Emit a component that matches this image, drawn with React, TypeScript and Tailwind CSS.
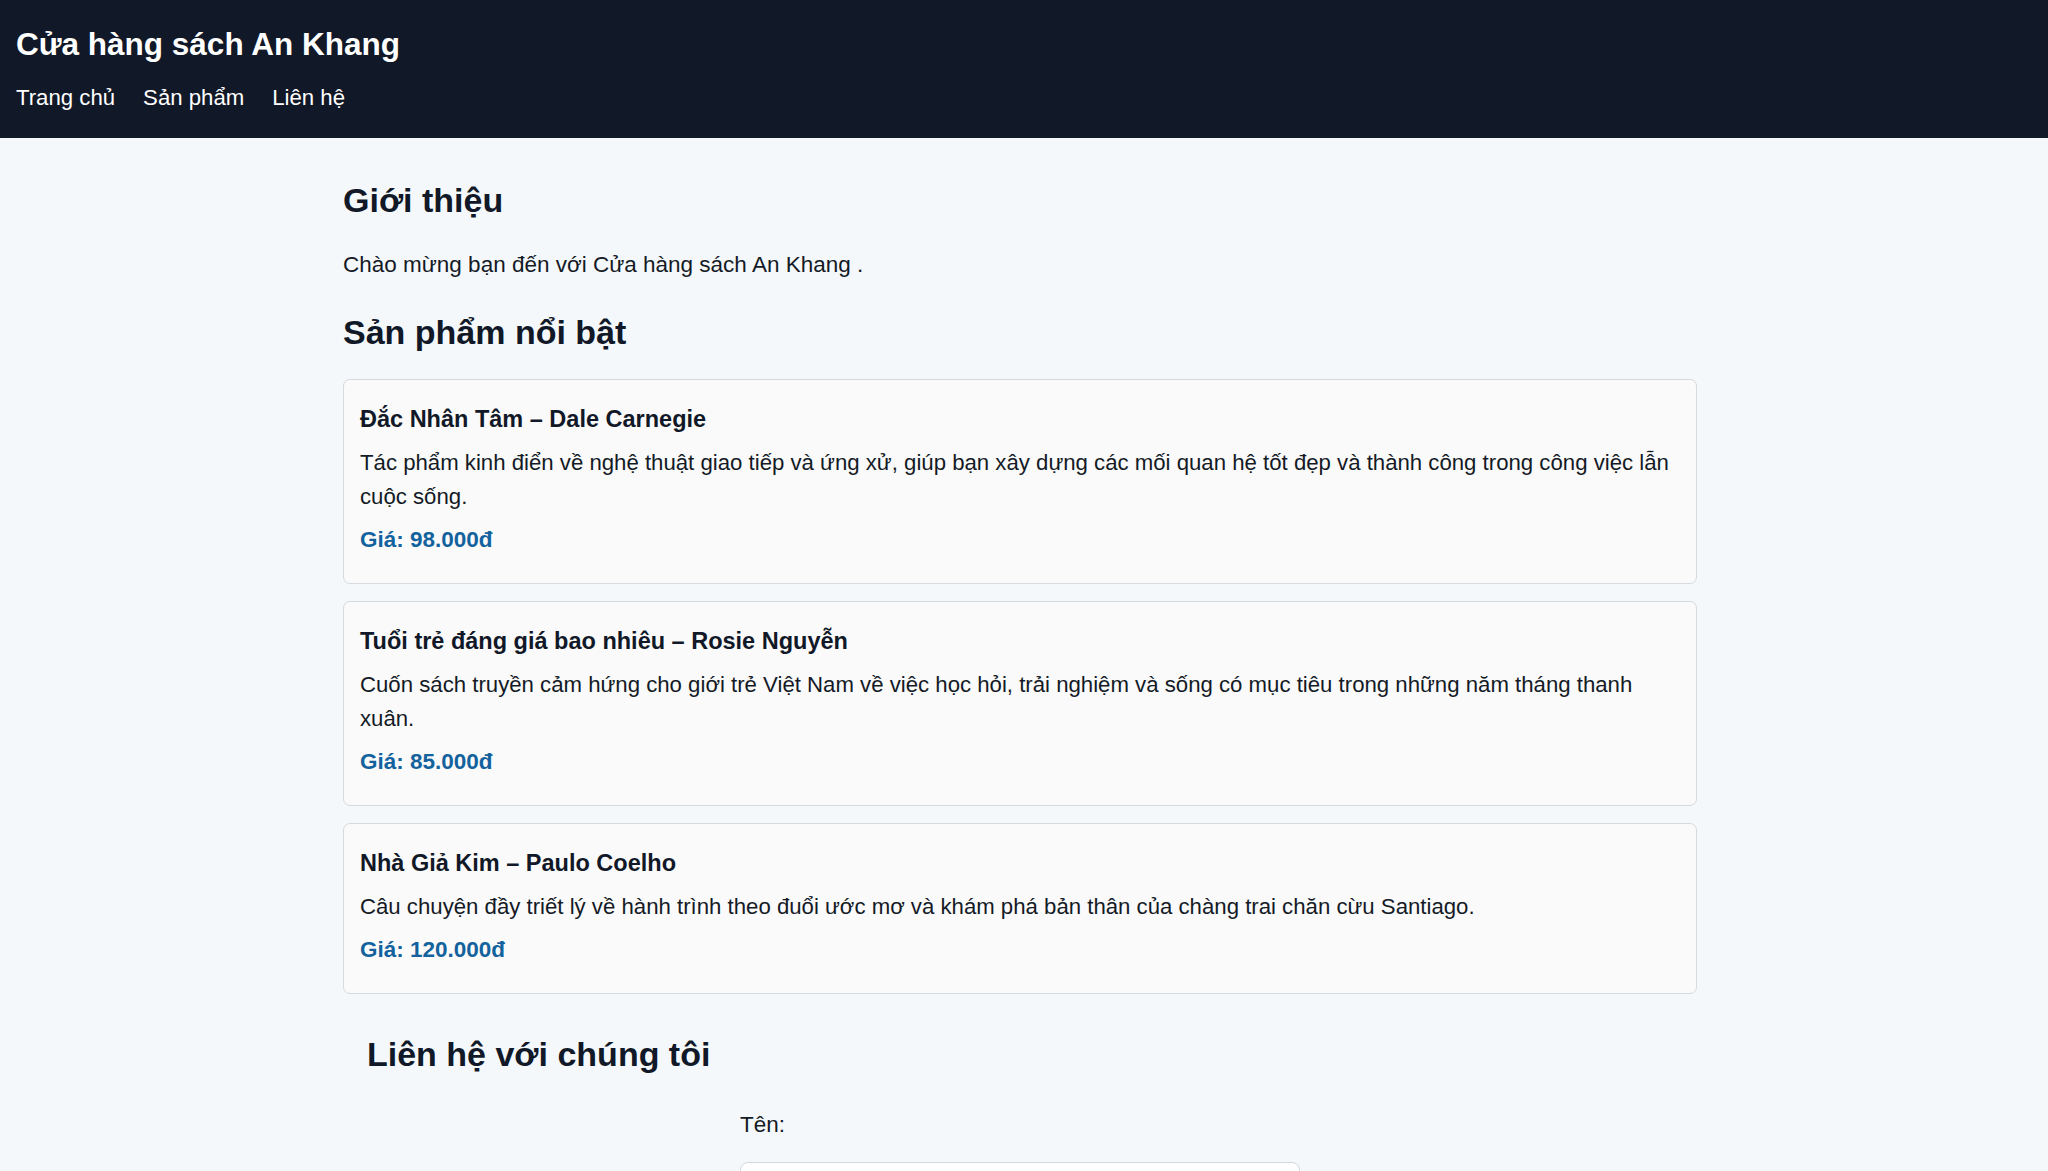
import React from 'react';

const books = [
  {
    title: 'Đắc Nhân Tâm – Dale Carnegie',
    desc: 'Tác phẩm kinh điển về nghệ thuật giao tiếp và ứng xử, giúp bạn xây dựng các mối quan hệ tốt đẹp và thành công trong công việc lẫn cuộc sống.',
    price: '98.000đ',
  },
  {
    title: 'Tuổi trẻ đáng giá bao nhiêu – Rosie Nguyễn',
    desc: 'Cuốn sách truyền cảm hứng cho giới trẻ Việt Nam về việc học hỏi, trải nghiệm và sống có mục tiêu trong những năm tháng thanh xuân.',
    price: '85.000đ',
  },
  {
    title: 'Nhà Giả Kim – Paulo Coelho',
    desc: 'Câu chuyện đầy triết lý về hành trình theo đuổi ước mơ và khám phá bản thân của chàng trai chăn cừu Santiago.',
    price: '120.000đ',
  },
];

const App: React.FC = () => {
  return (
    <div className="min-h-screen bg-[#f5f8fb] text-[#141a26] font-['Liberation_Sans',Arial,sans-serif]">
      {/* Header */}
      <header className="bg-[#111827] text-white px-4 pt-[26px] pb-[28px]">
        <h1 className="text-[31.5px] font-bold leading-[37px]">Cửa hàng sách An Khang</h1>
        <nav className="flex gap-[28px] mt-[22px] text-[22.2px] leading-[25px]">
          <a href="#">Trang chủ</a>
          <a href="#">Sản phẩm</a>
          <a href="#">Liên hệ</a>
        </nav>
      </header>

      <main className="flex justify-center pr-[8px]">
        <div className="w-[1354px] pt-[42px] pb-16">
          {/* Intro */}
          <h2 className="text-[34px] font-bold leading-[40px] text-[#111827]">Giới thiệu</h2>
          <p className="mt-[28px] text-[22.5px] leading-[34px]">
            Chào mừng bạn đến với Cửa hàng sách An Khang .
          </p>

          {/* Featured */}
          <h2 className="mt-[30px] text-[34px] font-bold leading-[40px] text-[#111827]">Sản phẩm nổi bật</h2>
          <div className="mt-[27px] flex flex-col gap-[17px]">
            {books.map((b, i) => (
              <div key={i} className="bg-[#fafafa] border border-[#d6d9dd] rounded-[7px] p-4">
                <h3 className="mt-[10px] text-[23.5px] font-bold leading-[27px] text-[#111827]">{b.title}</h3>
                <p className="mt-[13px] text-[22.2px] leading-[34px]">{b.desc}</p>
                <p className="mt-[9px] mb-[10px] text-[22.5px] leading-[34px] font-bold text-[#13629d]">
                  Giá: {b.price}
                </p>
              </div>
            ))}
          </div>

          {/* Contact */}
          <section className="mt-[40px]">
            <h2 className="pl-6 text-[34px] font-bold leading-[40px] text-[#111827]">Liên hệ với chúng tôi</h2>
            <form className="w-[560px] mx-auto mt-[34px] flex flex-col">
              <label className="text-[22.5px] leading-[34px]">Tên:</label>
              <input
                type="text"
                className="mt-[20px] h-[48px] bg-white border border-[#d3d8de] rounded-[8px] px-3 text-[22.5px]"
              />
              <label className="mt-6 text-[22.5px] leading-[34px]">Email:</label>
              <input
                type="email"
                className="mt-[20px] h-[48px] bg-white border border-[#d3d8de] rounded-[8px] px-3 text-[22.5px]"
              />
              <label className="mt-6 text-[22.5px] leading-[34px]">Nội dung:</label>
              <textarea className="mt-[20px] h-[140px] bg-white border border-[#d3d8de] rounded-[8px] px-3 py-2 text-[22.5px]" />
              <button
                type="button"
                className="mt-6 self-start bg-[#111827] text-white rounded-[8px] px-6 py-3 text-[22.5px]"
              >
                Gửi
              </button>
            </form>
          </section>
        </div>
      </main>
    </div>
  );
};

export default App;
